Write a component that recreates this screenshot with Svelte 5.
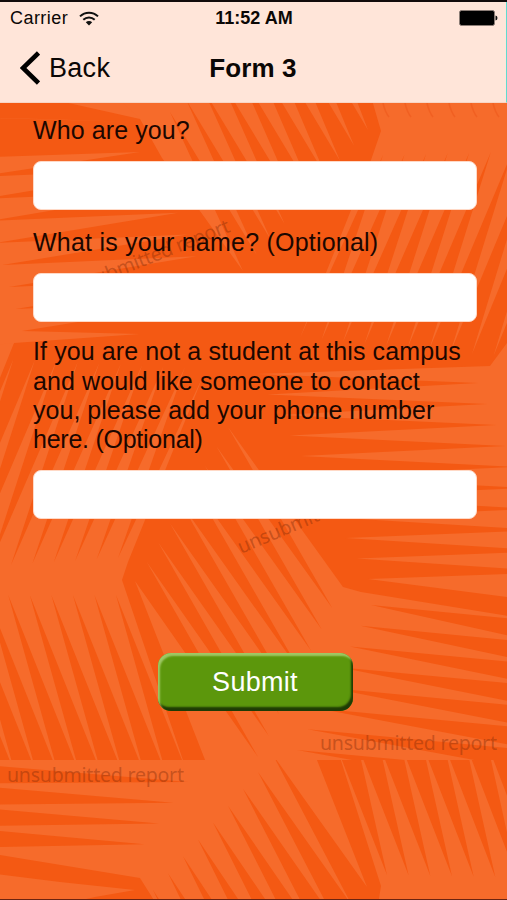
<script>
  let answers = $state(["", "", ""]);

  const questions = [
    ["Who are you?"],
    ["What is your name? (Optional)"],
    [
      "If you are not a student at this campus",
      "and would like someone to contact",
      "you, please add your phone number",
      "here. (Optional)",
    ],
  ];

  // n points spread evenly from a to b
  function row(a, b, n) {
    return Array.from({ length: n }, (_, i) => {
      const t = i / (n - 1);
      return [a[0] + (b[0] - a[0]) * t, a[1] + (b[1] - a[1]) * t];
    });
  }

  // zigzag between two rows of points
  function zig(a, b) {
    return a.flatMap((p, i) => (b[i] ? [p, b[i]] : [p]));
  }

  const upperLeaves = [
    [
      [-5, 118], [40, 119], [138, 122], [-5, 118], [-5, 157], [140, 152],
      ...zig(row([-24, 177], [22, 331], 8), row([160, 169], [215, 300], 7)),
      [140, 334], [14, 343], [-5, 366],
    ],
    [[55, 100], [140, 119], [130, 100]],
    [
      [120, 100], [140, 119], [162, 158],
      ...zig(row([243, 271], [368, 130], 10), row([170, 112], [300, 15], 9)),
      [318, 0], [100, 0],
    ],
    [
      [372, 100], [381, 131], [371, 160],
      ...zig(row([300, 338], [515, 358], 11), row([383, 155], [577, 150], 10)),
      [530, 100],
    ],
    [
      [530, 330], [507, 343], [490, 366],
      ...zig(row([256, 374], [368, 579], 11), row([478, 383], [560, 572], 10)),
      [530, 600],
    ],
    [
      [361, 592],
      ...zig(row([545, 622], [545, 773], 8), row([371, 605], [297, 750], 8)),
      [545, 795], [290, 795], [209, 770],
      ...zig(row([135, 581], [228, 427], 9), row([258, 757], [343, 587], 9)),
    ],
    [
      [-5, 345], [14, 343], [-5, 390],
      ...zig(row([-96, 572], [118, 558], 11), row([-8, 358], [185, 367], 10)),
      [204, 374], [145, 520], [128, 562], [122, 580],
      ...zig(row([188, 775], [-6, 775], 10), row([116, 595], [-78, 595], 10)),
      [-100, 570],
    ],
  ];

  const lowerLeaves = [
    [
      [-40, 750],
      ...zig(row([-50, 762], [-50, 848], 5), row([188, 782], [130, 865], 5)),
      [-30, 850], [140, 878], [157, 905],
      ...zig(row([230, 1050], [367, 887], 10), row([153, 890], [273, 755], 9)),
      [315, 755],
    ],
    [[-5, 874], [60, 882], [135, 890], [95, 897], [60, 905], [-5, 905]],
    [
      [378, 905], [381, 886],
      ...zig(row([336, 745], [531, 745], 10), row([387, 875], [582, 879], 10)),
      [600, 905],
    ],
  ];
</script>

<div class="screen">
  <svg class="backdrop" width="507" height="900" viewBox="0 0 507 900" aria-hidden="true">
    <defs>
      <clipPath id="upper"><rect y="100" width="507" height="660" /></clipPath>
      <clipPath id="lower"><rect y="760" width="507" height="140" /></clipPath>
    </defs>
    <rect width="507" height="900" fill="#f45913" />
    <g fill="#f66b2b">
      <g clip-path="url(#upper)">
        {#each upperLeaves as leaf}
          <polygon points={leaf.join(" ")} />
        {/each}
      </g>
      <g clip-path="url(#lower)">
        {#each lowerLeaves as leaf}
          <polygon points={leaf.join(" ")} />
        {/each}
      </g>
    </g>
    <g fill="none" stroke="#f16022" stroke-width="1.5">
      {#each [383, 405, 427, 449, 471, 493] as x}
        <path d="M{x} 103q2 9 6 14" />
      {/each}
    </g>
    <g class="mark">
      <text x="7" y="782" textLength="177">unsubmitted report</text>
      <text x="320" y="750" textLength="177">unsubmitted report</text>
      <text transform="translate(67 297) rotate(-21.8)" textLength="177">unsubmitted report</text>
      <text transform="translate(241 554) rotate(-23)" textLength="177">unsubmitted report</text>
    </g>
  </svg>

  <header>
    <div class="status">
      <div class="network">
        <span>Carrier</span>
        <svg width="20" height="15" viewBox="0 0 20 15">
          <path d="M1 5.4a13 13 0 0 1 18 0M4.3 8.8a8.2 8.2 0 0 1 11.4 0" fill="none" stroke="#111" stroke-width="2" />
          <path d="M6.8 11.2a4.6 4.6 0 0 1 6.4 0L10 14.4z" fill="#111" />
        </svg>
      </div>
      <span class="time">11:52 AM</span>
      <svg class="battery" width="39" height="16" viewBox="0 0 39 16">
        <rect x="0.5" y="0.5" width="35" height="15" rx="2" fill="#000" stroke="#8b7d76" />
        <path d="M36.5 5.5q2 .4 2 2.5t-2 2.5z" fill="#111" />
      </svg>
    </div>
    <nav>
      <button class="back">
        <svg width="20" height="34" viewBox="0 0 20 34">
          <path d="M18.5 2L3 17l15.500 15" fill="none" stroke="#000" stroke-width="4.6" />
        </svg>
        <span>Back</span>
      </button>
      <h1>Form 3</h1>
    </nav>
  </header>

  <form onsubmit={(e) => e.preventDefault()}>
    {#each questions as lines, i}
      <label>
        <span class="question">
          {#each lines as line}
            <span class="line">{line}</span>
          {/each}
        </span>
        <input type="text" bind:value={answers[i]} />
      </label>
    {/each}
    <button class="submit">Submit</button>
  </form>
</div>

<style>
  :global(body) {
    margin: 0;
  }

  .screen {
    position: relative;
    box-sizing: border-box;
    width: 507px;
    height: 900px;
    overflow: hidden;
    border-top: 2px solid #120b0b;
    border-bottom: 1px solid #6b2410;
    color: #1c0700;
    font-family: "Liberation Sans", Arial, sans-serif;
  }

  .backdrop {
    position: absolute;
    top: -2px;
    left: 0;
  }

  .mark {
    fill: #7c2a08;
    fill-opacity: 0.4;
    font-family: "Noto Sans", sans-serif;
    font-size: 19.5px;
  }

  header {
    position: relative;
    box-sizing: border-box;
    height: 101px;
    background: #ffe5d9;
    border-right: 1px solid #5fdcd0;
    border-bottom: 1px solid #f8d5c4;
    color: #0b0705;
  }

  .status {
    display: grid;
    grid-template-columns: 1fr auto 1fr;
    align-items: center;
    height: 32px;
    padding: 0 8px 0 10px;
    font-size: 18px;
  }

  .network {
    display: flex;
    align-items: center;
    gap: 11px;
    letter-spacing: 0.45px;
  }

  .time {
    font-size: 18px;
    font-weight: bold;
    white-space: nowrap;
  }

  .battery {
    justify-self: end;
  }

  nav {
    display: grid;
    grid-template-columns: 1fr auto 1fr;
    align-items: center;
    height: 68px;
  }

  button {
    border: 0;
    padding: 0;
    font-family: inherit;
  }

  .back {
    display: flex;
    align-items: center;
    gap: 9px;
    padding-left: 20px;
    background: none;
    color: inherit;
    font-size: 27px;
    letter-spacing: 0.3px;
  }

  h1 {
    margin: 0;
    font-size: 26px;
    letter-spacing: 0.1px;
  }

  form {
    position: relative;
    display: flex;
    flex-direction: column;
    width: 444px;
    margin-left: 33px;
    padding-top: 13px;
  }

  label {
    display: flex;
    flex-direction: column;
    gap: 16px;
    margin-bottom: 18px;
  }

  label:nth-of-type(2) {
    margin-bottom: 15px;
  }

  .question {
    font-size: 25px;
    line-height: 29.2px;
    letter-spacing: 0.1px;
  }

  label:nth-of-type(2) .question {
    letter-spacing: 0.22px;
  }

  .line {
    display: block;
    white-space: nowrap;
  }

  .line:nth-child(3) {
    letter-spacing: 0.03px;
  }

  .line:nth-child(4) {
    letter-spacing: -0.25px;
  }

  input {
    box-sizing: border-box;
    width: 100%;
    height: 49px;
    border: 1px solid #ffd9c6;
    border-radius: 8px;
    background: #fff;
    padding: 0 10px;
    font: inherit;
    font-size: 24px;
  }

  .submit {
    align-self: center;
    width: 195px;
    height: 58px;
    margin-top: 116px;
    border-radius: 13px;
    background: #5c970c;
    box-shadow:
      inset 2px 3px 2px #9fc865,
      inset -2px -4px 2px #1e3b05;
    color: #fff;
    font-size: 27px;
    letter-spacing: 0.3px;
  }
</style>
